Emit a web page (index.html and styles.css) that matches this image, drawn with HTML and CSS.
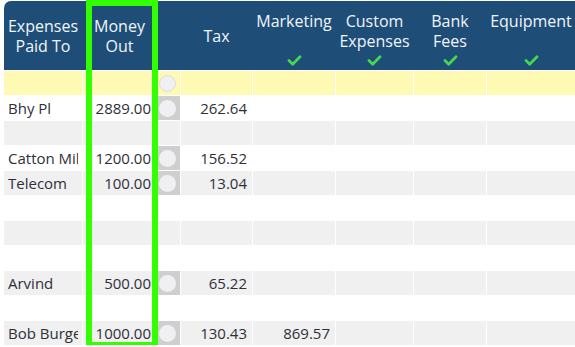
FILE: index.html
```html
<!DOCTYPE html>
<html>
<head>
<meta charset="utf-8">
<link rel="stylesheet" href="styles.css">
</head>
<body>
<div class="sheet">
  <div class="row head">
    <div class="hc mid"><span>Expenses<br>Paid To</span></div>
    <div class="hc mid"><span>Money<br>Out</span></div>
    <div class="hc"></div>
    <div class="hc mid"><span>Tax</span></div>
    <div class="hc top"><span>Marketing</span><svg class="chk" viewBox="0 0 16 12"><polyline points="2,6 6,10 14,2"/></svg></div>
    <div class="hc top"><span>Custom<br>Expenses</span><svg class="chk" viewBox="0 0 16 12"><polyline points="2,6 6,10 14,2"/></svg></div>
    <div class="hc top"><span>Bank<br>Fees</span><svg class="chk" viewBox="0 0 16 12"><polyline points="2,6 6,10 14,2"/></svg></div>
    <div class="hc top"><span>Equipment</span><svg class="chk" viewBox="0 0 16 12"><polyline points="2,6 6,10 14,2"/></svg></div>
  </div>

  <div class="row yellow">
    <div class="c"></div><div class="c"></div><div class="c rad plain"><i class="dot ring"></i></div><div class="c"></div><div class="c"></div><div class="c"></div><div class="c"></div><div class="c"></div>
  </div>
  <div class="row white">
    <div class="c name"><span>Bhy Pl</span></div><div class="c num">2889.00</div><div class="c rad"><i class="dot"></i></div><div class="c num">262.64</div><div class="c"></div><div class="c"></div><div class="c"></div><div class="c"></div>
  </div>
  <div class="row gray">
    <div class="c"></div><div class="c"></div><div class="c"></div><div class="c"></div><div class="c"></div><div class="c"></div><div class="c"></div><div class="c"></div>
  </div>
  <div class="row white">
    <div class="c name"><span>Catton Mill</span></div><div class="c num">1200.00</div><div class="c rad"><i class="dot"></i></div><div class="c num">156.52</div><div class="c"></div><div class="c"></div><div class="c"></div><div class="c"></div>
  </div>
  <div class="row gray">
    <div class="c name"><span>Telecom</span></div><div class="c num">100.00</div><div class="c rad"><i class="dot"></i></div><div class="c num">13.04</div><div class="c"></div><div class="c"></div><div class="c"></div><div class="c"></div>
  </div>
  <div class="row white">
    <div class="c"></div><div class="c"></div><div class="c"></div><div class="c"></div><div class="c"></div><div class="c"></div><div class="c"></div><div class="c"></div>
  </div>
  <div class="row gray">
    <div class="c"></div><div class="c"></div><div class="c"></div><div class="c"></div><div class="c"></div><div class="c"></div><div class="c"></div><div class="c"></div>
  </div>
  <div class="row white">
    <div class="c"></div><div class="c"></div><div class="c"></div><div class="c"></div><div class="c"></div><div class="c"></div><div class="c"></div><div class="c"></div>
  </div>
  <div class="row gray">
    <div class="c name"><span>Arvind</span></div><div class="c num">500.00</div><div class="c rad"><i class="dot"></i></div><div class="c num">65.22</div><div class="c"></div><div class="c"></div><div class="c"></div><div class="c"></div>
  </div>
  <div class="row white">
    <div class="c"></div><div class="c"></div><div class="c"></div><div class="c"></div><div class="c"></div><div class="c"></div><div class="c"></div><div class="c"></div>
  </div>
  <div class="row gray">
    <div class="c name"><span>Bob Burger</span></div><div class="c num">1000.00</div><div class="c rad"><i class="dot"></i></div><div class="c num">130.43</div><div class="c num">869.57</div><div class="c"></div><div class="c"></div><div class="c"></div>
  </div>

  <div class="highlight"></div>
</div>
</body>
</html>
```

FILE: styles.css
```css
html, body {
  margin: 0;
  padding: 0;
  background: #ffffff;
  overflow: hidden;
}

.sheet {
  position: relative;
  margin: 1px 0 0 4px;
  width: 571px;
  font-family: "Open Sans", "Liberation Sans", sans-serif;
}

.row {
  display: grid;
  grid-template-columns: 78px 73px 23px 71px 82px 77px 72px 88px;
  column-gap: 1px;
}

.head {
  height: 69px;
  background: #1e4d78;
  border-top-left-radius: 7px;
  color: #f2f5f9;
  font-size: 16px;
  line-height: 20px;
}

.hc {
  display: flex;
  flex-direction: column;
  align-items: center;
  text-align: center;
  white-space: nowrap;
}

.hc.mid {
  justify-content: center;
}

.hc.top {
  padding: 10px 0 4px;
  box-sizing: border-box;
}

.chk {
  margin-top: auto;
  width: 15px;
  height: 11px;
  fill: none;
  stroke: #45d84f;
  stroke-width: 3;
  stroke-linecap: round;
  stroke-linejoin: round;
}

.c {
  height: 25px;
  box-sizing: border-box;
  border-top: 1px solid #ffffff;
  font-size: 15px;
  line-height: 24px;
  color: #2f2f3a;
  white-space: nowrap;
}

.yellow .c { background: #fffab3; }
.gray .c { background: #f0f0f0; }
.white .c { background: #ffffff; }

.name {
  padding-left: 4px;
}

.name span {
  display: block;
  overflow: hidden;
  margin-right: 4px;
}

.num {
  text-align: right;
  padding-right: 5px;
}

.rad {
  display: flex;
  align-items: center;
  padding-left: 2px;
}

.white .rad, .gray .rad {
  background: #cfcfcf;
}

.yellow .rad.plain {
  background: #fffab3;
}

.dot {
  display: block;
  width: 17px;
  height: 17px;
  border-radius: 50%;
  background: #f0eff2;
}

.dot.ring {
  box-sizing: border-box;
  border: 1px solid #dcdcdc;
}

.highlight {
  position: absolute;
  left: 82px;
  top: -1px;
  width: 72px;
  height: 348px;
  box-sizing: border-box;
  border: 6px solid #33ff00;
}
```
